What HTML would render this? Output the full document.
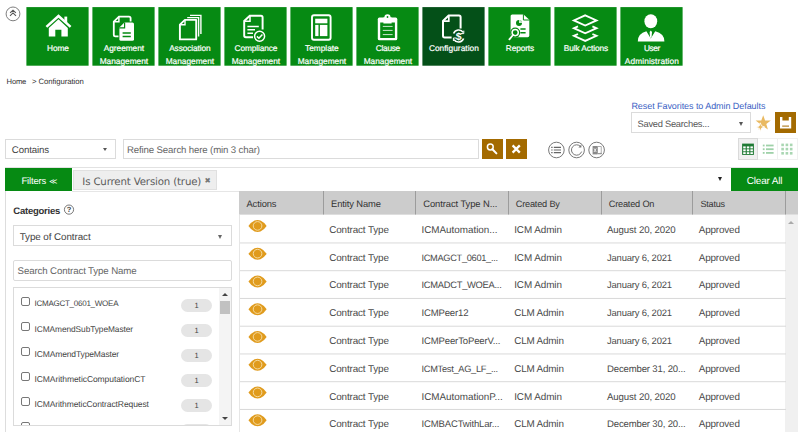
<!DOCTYPE html>
<html lang="en">
<head>
<meta charset="utf-8">
<title>Configuration</title>
<style>
*{box-sizing:border-box;margin:0;padding:0}
html,body{width:800px;height:432px;overflow:hidden;background:#fff}
body{position:relative;font-family:"Liberation Sans",sans-serif;color:#444;font-size:10px;text-rendering:geometricPrecision}
.a{position:absolute;white-space:nowrap}
.tile{position:absolute;top:7px;width:63px;height:59px;color:#fff;text-align:center;font-size:8.3px;line-height:12.6px}
.tile svg{position:absolute;left:0;top:0}
.tile .l{position:absolute;left:-5.6px;right:-6.4px;top:35.4px}
.tile .l span{display:block;height:12.6px;line-height:12.6px;-webkit-text-stroke:0.2px #fff}
.box{position:absolute;border:1px solid #dbdbdb;background:#fff}
.th{position:absolute;top:191px;height:24px;border-bottom:1px solid #dedede;background:#ccc;border-right:1px solid #9c9c9c;color:#333;font-size:9.6px;line-height:26.5px;padding-left:7.5px}
.row{position:absolute;left:239px;width:546px;height:27.7px;font-size:9.9px;line-height:29px;color:#4a4a4a}
.row span{position:relative;top:1px;display:inline-block;width:0;line-height:10px;white-space:nowrap;vertical-align:baseline}
.c1{left:90.2px}.c2{left:182.5px}.c3{left:275.2px}.c4{left:368px}.c5{left:459.7px}
.row svg{position:absolute;left:9px;top:3.6px}
.it{position:absolute;left:13px;width:206px;height:25px;font-size:8.5px;color:#444}
.it i{position:absolute;left:8.2px;top:1.4px;width:9px;height:9px;border:1px solid #777;border-radius:2px;background:#fff}
.it b{position:absolute;left:21.5px;top:2.2px;font-weight:normal;line-height:12px}
.it u{position:absolute;left:168px;top:2.7px;width:31px;height:13px;border-radius:6.5px;background:#e5e5e5;text-decoration:none;text-align:center;font-size:7.5px;line-height:13.5px;color:#444}
/*FIT*/
.h1 .hh{font-size:9.35px !important;letter-spacing:-0.109px}
.h2 .hh{font-size:9.37px !important;letter-spacing:-0.098px}
.h3 .hh{font-size:9.4px !important;letter-spacing:-0.067px}
.h4 .hh{font-size:9.18px !important;letter-spacing:-0.182px}
.h5 .hh{font-size:9.18px !important;letter-spacing:-0.186px}
.h6 .hh{font-size:9.06px !important;letter-spacing:-0.231px}
.c1{font-size:9.9px !important;letter-spacing:-0.133px}
.n0{font-size:9.9px !important;letter-spacing:-0.02px}
.n1{font-size:9.24px !important;letter-spacing:-0.306px}
.n2{font-size:9.36px !important;letter-spacing:-0.276px}
.n3{font-size:9.57px !important;letter-spacing:-0.172px}
.n4{font-size:9.56px !important;letter-spacing:-0.148px}
.n5{font-size:9.25px !important;letter-spacing:-0.283px}
.n6{font-size:9.9px !important;letter-spacing:-0.019px}
.n7{font-size:9.54px !important;letter-spacing:-0.157px}
.icm{font-size:9.9px !important;letter-spacing:-0.068px}
.clm{font-size:9.9px !important;letter-spacing:-0.168px}
.aug{font-size:9.66px !important;letter-spacing:-0.114px}
.jan{font-size:9.44px !important;letter-spacing:-0.184px}
.dec{font-size:9.55px !important;letter-spacing:-0.147px}
.c5{font-size:9.9px !important;letter-spacing:-0.147px}
#bc1{font-size:7.63px !important;letter-spacing:-0.198px}
#bc3{font-size:7.74px !important;letter-spacing:-0.064px}
#reset{font-size:9.0px !important;letter-spacing:-0.064px}
#saved{font-size:9.33px !important;letter-spacing:-0.265px}
#contains{font-size:9.69px !important;letter-spacing:-0.134px}
#refine{font-size:9.64px !important;letter-spacing:-0.132px}
#filt{font-size:9.54px !important;letter-spacing:-0.159px}
#chip{font-size:10.21px !important;letter-spacing:-0.158px}
#clear{font-size:10.0px !important;letter-spacing:-0.181px}
#cat{font-size:9.49px !important;letter-spacing:-0.226px}
#toc{font-size:9.82px !important;letter-spacing:-0.067px}
#sctn{font-size:9.69px !important;letter-spacing:-0.119px}
.i0{font-size:8.01px !important;letter-spacing:-0.252px}
.i1{font-size:8.34px !important;letter-spacing:-0.069px}
.i2{font-size:8.5px !important;letter-spacing:-0.131px}
.i3{font-size:8.5px !important;letter-spacing:-0.076px}
.i4{font-size:8.5px !important;letter-spacing:-0.102px}
.t0{font-size:8.3px !important;letter-spacing:-0.114px}
.t1a{font-size:8.3px !important;letter-spacing:-0.024px}
.mg{font-size:8.3px !important;letter-spacing:-0.004px}
.t2a{font-size:8.3px !important;letter-spacing:-0.084px}
.t3a{font-size:8.3px !important;letter-spacing:-0.113px}
.t4a{font-size:8.3px !important;letter-spacing:-0.01px}
.t5a{font-size:8.3px !important;letter-spacing:-0.286px}
.t6{font-size:8.3px !important;letter-spacing:0.053px}
.t7{font-size:8.3px !important;letter-spacing:-0.11px}
.t8{font-size:8.3px !important;letter-spacing:-0.073px}
.t9a{font-size:8.3px !important;letter-spacing:-0.377px}
.t9b{font-size:8.3px !important;letter-spacing:0.109px}
/*ENDFIT*/
</style>
</head>
<body>

<!-- collapse icon -->
<svg class="a" style="left:4px;top:6px" width="18" height="18" viewBox="0 0 18 18"><circle cx="9" cy="7.9" r="6.9" fill="#fff" stroke="#707070" stroke-width="0.9"/><path d="M6.1 6.8 L9 4.3 L11.9 6.8 M6 9.8 L9 6.9 L12 9.8" fill="none" stroke="#555" stroke-width="1.1"/></svg>

<!-- tiles -->
<div class="tile" id="tile0" style="left:26px"><svg width="63" height="59" viewBox="0 0 63 59"><rect x="0.4" y="0.1" width="62.2" height="58.6" fill="#068a13"/><path d="M20.4 19.9 L32.5 9 L44.6 19.9" fill="none" stroke="#fff" stroke-width="2.5" stroke-linejoin="miter"/><rect x="38.4" y="9.6" width="2.8" height="6" fill="#fff"/><path d="M22.8 21 L32.5 12.2 L41.8 21 V29.4 H35.4 V22.8 H29.3 V29.4 H22.8 Z" fill="#fff"/></svg><div class="l"><span class="t0">Home</span></div></div>
<div class="tile" id="tile1" style="left:92px"><svg width="63" height="59" viewBox="0 0 63 59"><rect x="0.4" y="0.1" width="62.2" height="58.6" fill="#068a13"/><path d="M26.5 29.4 H23.4 Q21.8 29.4 21.8 27.8 V14.6 L27 9.6 H37 Q38.6 9.6 38.6 11.2 V14.5" fill="none" stroke="#fff" stroke-width="1.8"/><path d="M21.8 14.8 H26.9 V9.6" fill="none" stroke="#fff" stroke-width="1.5"/><path d="M27.4 20.6 L32.4 15.6 H40.4 Q42 15.6 42 17.2 V32.2 Q42 33.8 40.4 33.8 H29 Q27.4 33.8 27.4 32.2 Z" fill="#fff"/><path d="M27.2 20.8 H32.6 V15.4" fill="none" stroke="#068a13" stroke-width="1.2"/><path d="M30.6 26 H38.8 M30.6 29.4 H38.8" stroke="#068a13" stroke-width="1.5"/></svg><div class="l"><span class="t1a">Agreement</span><span class="mg">Management</span></div></div>
<div class="tile" id="tile2" style="left:158px"><svg width="63" height="59" viewBox="0 0 63 59"><rect x="0.4" y="0.1" width="62.2" height="58.6" fill="#068a13"/><path d="M21.9 17.6 L26.9 12.9 H38.2 V32.4 H21.9 Z" fill="none" stroke="#fff" stroke-width="1.9" stroke-linejoin="round"/><path d="M22 17.8 H27 V13" fill="none" stroke="#fff" stroke-width="1.4"/><path d="M29.2 10.6 H40.6 V29.6 M32 8.4 H42.9 V27" fill="none" stroke="#fff" stroke-width="1.4"/></svg><div class="l"><span class="t2a">Association</span><span class="mg">Management</span></div></div>
<div class="tile" id="tile3" style="left:224px"><svg width="63" height="59" viewBox="0 0 63 59"><rect x="0.4" y="0.1" width="62.2" height="58.6" fill="#068a13"/><path d="M29 30.2 H21.8 Q20.2 30.2 20.2 28.6 V14 L25.8 8.8 H37 Q38.6 8.8 38.6 10.4 V22.5" fill="none" stroke="#fff" stroke-width="1.95"/><path d="M20.4 14.2 H26 V9" fill="none" stroke="#fff" stroke-width="1.5"/><path d="M23.4 19.4 H34.8 M23.4 22.8 H31 M23.4 26.2 H29" stroke="#fff" stroke-width="1.5"/><circle cx="35.6" cy="29.3" r="5" fill="#068a13" stroke="#fff" stroke-width="1.5"/><path d="M32.9 29.4 L34.9 31.3 L38.4 27.5" fill="none" stroke="#fff" stroke-width="1.5"/></svg><div class="l"><span class="t3a">Compliance</span><span class="mg">Management</span></div></div>
<div class="tile" id="tile4" style="left:290px"><svg width="63" height="59" viewBox="0 0 63 59"><rect x="0.4" y="0.1" width="62.2" height="58.6" fill="#068a13"/><rect x="22" y="8.2" width="18.6" height="24.6" rx="2" fill="none" stroke="#fff" stroke-width="1.9"/><rect x="25.2" y="11.7" width="12.2" height="4.6" fill="#fff"/><rect x="25.2" y="17.9" width="3.3" height="11.2" fill="#fff"/><rect x="29.9" y="17.9" width="7.5" height="11.2" fill="#fff"/></svg><div class="l"><span class="t4a">Template</span><span class="mg">Management</span></div></div>
<div class="tile" id="tile5" style="left:356px"><svg width="63" height="59" viewBox="0 0 63 59"><rect x="0.4" y="0.1" width="62.2" height="58.6" fill="#068a13"/><rect x="21.8" y="10.6" width="19.5" height="22.7" rx="1.6" fill="#fff"/><circle cx="31.5" cy="10.4" r="3.1" fill="#fff"/><rect x="27.4" y="10.4" width="8.2" height="5.4" fill="#fff"/><circle cx="31.5" cy="10" r="0.9" fill="#068a13"/><path d="M24.2 15.4 H27.4 V16.6 H35.6 V15.4 H38.9 V30.9 H24.2 Z" fill="#068a13"/><path d="M26.8 19.4 H36.6 M26.8 23.4 H36.6 M26.8 27.6 H36.6" stroke="#fff" stroke-width="0.8"/></svg><div class="l"><span class="t5a">Clause</span><span class="mg">Management</span></div></div>
<div class="tile on" id="tile6" style="left:422px"><svg width="63" height="59" viewBox="0 0 63 59"><rect x="0.4" y="0.1" width="62.2" height="58.6" fill="#045018"/><path d="M29.6 30.4 H22.6 Q21 30.4 21 28.8 V14 L26.6 8.6 H37 Q38.6 8.6 38.6 10.2 V21.5" fill="none" stroke="#fff" stroke-width="2"/><path d="M21.2 14.2 H26.8 V8.8" fill="none" stroke="#fff" stroke-width="1.7"/><path d="M31.6 26.6 A5.4 5.4 0 0 1 41.2 25.4 M41.6 31.4 A5.4 5.4 0 0 1 32 32.6" fill="none" stroke="#fff" stroke-width="1.6"/><path d="M41.8 23.6 V26.6 H38.8 M31.4 34 V31 H34.4" fill="none" stroke="#fff" stroke-width="1"/><text x="36.6" y="32.6" font-size="10.5" font-weight="bold" fill="#fff" text-anchor="middle" font-family="Liberation Sans, sans-serif">$</text></svg><div class="l"><span class="t6">Configuration</span></div></div>
<div class="tile" id="tile7" style="left:488px"><svg width="63" height="59" viewBox="0 0 63 59"><rect x="0.4" y="0.1" width="62.2" height="58.6" fill="#068a13"/><path d="M24.2 7.4 H35.6 L41.3 12.8 V28.6 Q41.3 30.2 39.7 30.2 H24.2 Q22.6 30.2 22.6 28.6 V9 Q22.6 7.4 24.2 7.4 Z" fill="#fff"/><path d="M35.4 7.2 V13 H41.5" fill="none" stroke="#068a13" stroke-width="1"/><circle cx="31" cy="15.9" r="3" fill="#068a13"/><path d="M31 15.9 V12.9 A3 3 0 0 1 34 15.9 Z" fill="#fff" opacity=".8"/><path d="M32.4 22.1 H37.6 M32.4 25.8 H37.6" stroke="#068a13" stroke-width="1.5"/><circle cx="27.2" cy="25.6" r="5" fill="#068a13"/><path d="M25.6 27.6 L20.6 33.2" stroke="#068a13" stroke-width="4"/><circle cx="27.2" cy="25.6" r="3.1" fill="#068a13" stroke="#fff" stroke-width="1.5"/><path d="M25 28 L21.4 32.4" stroke="#fff" stroke-width="1.8" stroke-linecap="round"/></svg><div class="l"><span class="t7">Reports</span></div></div>
<div class="tile" id="tile8" style="left:554px"><svg width="63" height="59" viewBox="0 0 63 59"><rect x="0.4" y="0.1" width="62.2" height="58.6" fill="#068a13"/><path d="M31.2 8.35 L42.5 13.45 L31.2 18.55 L19.9 13.45 Z" fill="none" stroke="#fff" stroke-width="1.9" stroke-linejoin="miter"/><path d="M24 19.3 L19.9 21.15 L31.2 26.25 L42.5 21.15 L38.4 19.3" fill="none" stroke="#fff" stroke-width="1.9"/><path d="M24 27 L19.9 28.85 L31.2 33.95 L42.5 28.85 L38.4 27" fill="none" stroke="#fff" stroke-width="1.9"/></svg><div class="l"><span class="t8">Bulk Actions</span></div></div>
<div class="tile" id="tile9" style="left:620px"><svg width="63" height="59" viewBox="0 0 63 59"><rect x="0.4" y="0.1" width="62.2" height="58.6" fill="#068a13"/><ellipse cx="30.8" cy="14.2" rx="6.4" ry="7" fill="#fff"/><path d="M17.8 34.4 Q17.8 26.4 26.4 24.2 L30.8 31.6 L35.2 24.2 Q44.4 26.4 44.4 34.4 Z" fill="#fff"/><path d="M30.8 23.6 L32 25 L31.6 30 L30.8 31.4 L30 30 L29.6 25 Z" fill="#fff"/></svg><div class="l"><span class="t9a">User</span><span class="t9b">Administration</span></div></div>

<!-- breadcrumb -->
<div class="a" id="bc" style="left:6.6px;top:77px;font-size:7.9px;line-height:10px;color:#333"><span id="bc1">Home</span><span id="bc2" style="position:absolute;left:25.4px;top:0">&gt;</span><span id="bc3" style="position:absolute;left:31.9px;top:0">Configuration</span></div>

<!-- favorites -->
<div class="a" id="reset" style="left:631.4px;top:100px;font-size:9px;line-height:12px;color:#3b5fc4">Reset Favorites to Admin Defaults</div>
<div class="box" style="left:631px;top:112px;width:120px;height:21px"></div>
<div class="a" id="saved" style="left:637.5px;top:117.5px;font-size:10px;line-height:13px;color:#555">Saved Searches...</div>
<div class="a" style="left:738.6px;top:122.2px;width:0;height:0;border-left:2.5px solid transparent;border-right:2.5px solid transparent;border-top:4px solid #555"></div>
<div class="a" style="left:775px;top:112px;width:21px;height:21px;background:#a36a00"><svg width="21" height="21" viewBox="0 0 21 21"><path d="M5 5 H7.4 V8.4 H13.8 V5 H16.2 V16.6 H5 Z" fill="#fff"/><path d="M7.2 14.1 H14" stroke="#a36a00" stroke-width="1"/></svg></div>
<svg class="a" style="left:754px;top:114px" width="19" height="19" viewBox="0 0 19 19"><path d="M9.2 1.2 L11.1 6.4 L16.8 6.6 L12.3 10 L13.9 15.4 L9.2 12.2 L4.5 15.4 L6.1 10 L1.6 6.6 L7.3 6.4 Z" fill="#e9b961"/><path d="M6.3 8.8 L7.5 11.9 L10.6 12.9 L7.6 14.1 L6.5 17.4 L5.3 14.2 L2 13.3 L5.2 12 Z" fill="#e9b961" stroke="#fff" stroke-width="0.8"/></svg>

<!-- search row -->
<div class="box" style="left:5px;top:139px;width:111px;height:20px"></div>
<div class="a" id="contains" style="left:11.8px;top:143.6px;font-size:10px;line-height:13px;color:#444">Contains</div>
<div class="a" style="left:102.6px;top:148.2px;width:0;height:0;border-left:2.6px solid transparent;border-right:2.6px solid transparent;border-top:3.8px solid #555"></div>
<div class="box" style="left:123px;top:139px;width:356px;height:20px"></div>
<div class="a" id="refine" style="left:127px;top:143.6px;font-size:10px;line-height:13px;color:#666">Refine Search here (min 3 char)</div>
<div class="a" style="left:482px;top:139px;width:21px;height:20px;background:#a36a00"><svg width="21" height="20" viewBox="0 0 21 20"><circle cx="8.3" cy="8" r="2.9" fill="none" stroke="#fff" stroke-width="1.5"/><path d="M10.4 10.2 L14.4 14.4" stroke="#fff" stroke-width="2" stroke-linecap="round"/></svg></div>
<div class="a" style="left:506px;top:139px;width:21px;height:20px;background:#a36a00"><svg width="21" height="20" viewBox="0 0 21 20"><path d="M6.6 6.4 L13.8 13.6 M13.8 6.4 L6.6 13.6" stroke="#fff" stroke-width="2.3"/></svg></div>
<svg class="a" style="left:546px;top:140px" width="62" height="20" viewBox="0 0 62 20"><circle cx="10.4" cy="10" r="7.8" fill="#fff" stroke="#6a6a6a" stroke-width="0.9"/><path d="M7.8 7.3 H15 M7.8 10 H15 M7.8 12.7 H15" stroke="#666" stroke-width="1.2"/><path d="M5.2 7.3 H6.6 M5.2 10 H6.6 M5.2 12.7 H6.6" stroke="#666" stroke-width="1.2"/><circle cx="30.6" cy="10" r="7.8" fill="#fff" stroke="#6a6a6a" stroke-width="0.9"/><path d="M34.6 6.6 A5.2 5.2 0 1 0 35.6 11.6" fill="none" stroke="#777" stroke-width="1"/><path d="M35.4 4.4 V7.4 H32.4 Z" fill="#777"/><circle cx="50.6" cy="10" r="7.8" fill="#fff" stroke="#6a6a6a" stroke-width="0.9"/><rect x="46.6" y="6" width="5" height="8.4" fill="#8a8a8a"/><rect x="51.6" y="6.6" width="3.6" height="7" fill="none" stroke="#999" stroke-width="0.8"/><path d="M48 8.4 L50.2 12 M50.2 8.4 L48 12" stroke="#fff" stroke-width="0.8"/><path d="M52 13.8 H55.6 L54.6 12.8" stroke="#888" stroke-width="0.7" fill="none"/></svg>

<div class="a" style="left:738px;top:138px;width:60px;height:22px;border:1px solid #f0f0f0"></div>
<div class="a" style="left:738px;top:138px;width:20px;height:22px;background:#f0f0f0;border:1px solid #dadada"></div>
<div class="a" style="left:777px;top:139px;width:1px;height:20px;background:#f0f0f0"></div>
<svg class="a" style="left:742px;top:143px" width="12" height="12" viewBox="0 0 12 12"><rect x="0.1" y="0.6" width="11.8" height="11.3" fill="#1e7a34"/><g fill="#fff"><rect x="1.2" y="3.4" width="2.5" height="2"/><rect x="4.8" y="3.4" width="2.5" height="2"/><rect x="8.4" y="3.4" width="2.5" height="2"/><rect x="1.2" y="6.3" width="2.5" height="2"/><rect x="4.8" y="6.3" width="2.5" height="2"/><rect x="8.4" y="6.3" width="2.5" height="2"/><rect x="1.2" y="9.2" width="2.5" height="1.8"/><rect x="4.8" y="9.2" width="2.5" height="1.8"/><rect x="8.4" y="9.2" width="2.5" height="1.8"/></g></svg>
<svg class="a" style="left:762px;top:143px" width="13" height="12" viewBox="0 0 13 12"><g fill="#9fd1a9"><rect x="0.8" y="1.6" width="1.8" height="1.8"/><rect x="4" y="1.6" width="7.6" height="1.8"/><rect x="0.8" y="5.3" width="1.8" height="1.8"/><rect x="4" y="5.3" width="7.6" height="1.8"/><rect x="0.8" y="9" width="1.8" height="1.8"/><rect x="4" y="9" width="7.6" height="1.8"/></g></svg>
<svg class="a" style="left:781px;top:143px" width="12" height="12" viewBox="0 0 12 12"><g fill="#a9d6b2"><rect x="0.3" y="0.6" width="2.6" height="2.6"/><rect x="4.6" y="0.6" width="2.6" height="2.6"/><rect x="8.9" y="0.6" width="2.6" height="2.6"/><rect x="0.3" y="4.8" width="2.6" height="2.6"/><rect x="4.6" y="4.8" width="2.6" height="2.6"/><rect x="8.9" y="4.8" width="2.6" height="2.6"/><rect x="0.3" y="9" width="2.6" height="2.6"/><rect x="4.6" y="9" width="2.6" height="2.6"/><rect x="8.9" y="9" width="2.6" height="2.6"/></g></svg>
<!-- separator -->
<div class="a" style="left:5px;top:167px;width:793px;height:1px;background:#e2e2e2"></div>

<!-- filter bar -->
<div class="a" style="left:5px;top:168px;width:67px;height:23px;background:#068a13;color:#fff;font-size:10px;line-height:27.4px;padding-left:16.4px" id="filters"><span id="filt">Filters</span> <span id="ll" style="font-size:8px;position:relative;top:-0.3px">&#x226A;</span></div>
<div class="a" style="left:73px;top:170px;width:144px;height:20px;background:#eee;border:1px solid #e0e0e0"></div>
<div class="a" id="chip" style="left:82.3px;top:175.6px;font-family:'DejaVu Sans',sans-serif;font-size:10.6px;line-height:13px;color:#5a5a5a">Is Current Version (true)</div>
<div class="a" id="chipx" style="left:204.6px;top:174.6px;font-size:7.5px;line-height:12px;color:#777;font-family:'DejaVu Sans',sans-serif">&#x2716;</div>
<div class="a" style="left:718.4px;top:177.4px;width:0;height:0;border-left:2.5px solid transparent;border-right:2.5px solid transparent;border-top:4px solid #222"></div>
<div class="a" id="clear" style="left:731px;top:168px;width:67px;height:23px;background:#068a13;color:#fff;font-size:10.5px;line-height:27px;text-align:center">Clear All</div>

<div class="a" style="left:72px;top:191px;width:167px;height:1px;background:#e6e6e6"></div>
<!-- left panel -->
<div class="a" style="left:5px;top:191px;width:1px;height:241px;background:#ddd"></div>
<div class="a" id="cat" style="left:13.3px;top:204.6px;font-size:10px;line-height:13px;color:#333;font-weight:bold">Categories</div>
<svg class="a" style="left:63px;top:204px" width="12" height="12" viewBox="0 0 12 12"><circle cx="6" cy="5.6" r="4.6" fill="#fff" stroke="#555" stroke-width="0.8"/><text x="6" y="8.4" font-size="7.5" font-weight="bold" text-anchor="middle" fill="#444" font-family="Liberation Sans, sans-serif">?</text></svg>
<div class="box" style="left:13px;top:225px;width:219px;height:21px"></div>
<div class="a" id="toc" style="left:19.7px;top:231px;font-size:10px;line-height:13px;color:#444">Type of Contract</div>
<div class="a" style="left:218.4px;top:235px;width:0;height:0;border-left:2.7px solid transparent;border-right:2.7px solid transparent;border-top:4px solid #666"></div>
<div class="box" style="left:13px;top:260px;width:219px;height:21px;border-radius:2px"></div>
<div class="a" id="sctn" style="left:17.6px;top:265px;font-size:10px;line-height:13px;color:#666">Search Contract Type Name</div>
<div class="box" style="left:13px;top:287px;width:219px;height:139px"></div>

<div class="a" style="left:219px;top:288px;width:12px;height:137px;background:#f4f4f4"></div>
<div class="a" style="left:220px;top:301px;width:10px;height:13px;background:#c1c1c1"></div>
<div class="a" style="left:222px;top:293px;width:0;height:0;border-left:3px solid transparent;border-right:3px solid transparent;border-bottom:3.5px solid #444"></div>
<div class="a" style="left:222px;top:416.5px;width:0;height:0;border-left:3px solid transparent;border-right:3px solid transparent;border-top:3.5px solid #444"></div>
<div class="it" style="top:296px"><i></i><b class="i0">ICMAGCT_0601_WOEA</b><u>1</u></div>
<div class="it" style="top:321px"><i></i><b class="i1">ICMAmendSubTypeMaster</b><u>1</u></div>
<div class="it" style="top:346px"><i></i><b class="i2">ICMAmendTypeMaster</b><u>1</u></div>
<div class="it" style="top:371px"><i></i><b class="i3">ICMArithmeticComputationCT</b><u>1</u></div>
<div class="it" style="top:396px"><i></i><b class="i4">ICMArithmeticContractRequest</b><u>1</u></div>

<div class="a" style="left:14px;top:420px;width:205px;height:5px;overflow:hidden"><div class="it" style="top:1px;left:-1px"><i></i><u></u></div></div>

<!-- grid header -->
<div class="th h1" style="left:239px;width:85px"><span class="hh">Actions</span></div>
<div class="th h2" style="left:324px;width:92px;padding-left:7px"><span class="hh">Entity Name</span></div>
<div class="th h3" style="left:416px;width:93px;padding-left:7.2px"><span class="hh">Contract Type N...</span></div>
<div class="th h4" style="left:509px;width:93px;padding-left:6.7px"><span class="hh">Created By</span></div>
<div class="th h5" style="left:602px;width:91px;padding-left:6.7px"><span class="hh">Created On</span></div>
<div class="th h6" style="left:693px;width:93px;padding-left:7.5px"><span class="hh">Status</span></div>
<div class="th h7" style="left:786px;width:12px;border-right:0;padding:0"></div>
<div class="a" style="left:785px;top:215px;width:13px;height:217px;background:#f0f0f0"></div>

<div class="a" style="left:788px;top:220.5px;width:0;height:0;border-left:3px solid transparent;border-right:3px solid transparent;border-bottom:3.5px solid #aaa"></div>
<svg class="a" style="left:239px;top:215px" width="547" height="217" viewBox="0 0 547 217"><rect x="0" y="27.45" width="547" height="1" fill="#d9d9d9"/><rect x="0" y="55.20" width="547" height="1" fill="#d9d9d9"/><rect x="0" y="82.95" width="547" height="1" fill="#d9d9d9"/><rect x="0" y="110.70" width="547" height="1" fill="#d9d9d9"/><rect x="0" y="138.45" width="547" height="1" fill="#d9d9d9"/><rect x="0" y="166.20" width="547" height="1" fill="#d9d9d9"/><rect x="0" y="193.95" width="547" height="1" fill="#d9d9d9"/><rect x="0" y="0" width="1" height="217" fill="#e6e6e6"/><g transform="translate(9.05,4.00)"><path d="M0.4 7 Q3.2 2.8 6.6 1.4 Q9.5 0.5 12.4 1.4 Q15.8 2.8 18.6 7 Q15.8 11.2 12.4 12.6 Q9.5 13.5 6.6 12.6 Q3.2 11.2 0.4 7 Z" fill="#e09b1d"/><circle cx="9.5" cy="6.9" r="4.3" fill="none" stroke="#f6e0ac" stroke-width="0.9"/></g><g transform="translate(9.05,31.75)"><path d="M0.4 7 Q3.2 2.8 6.6 1.4 Q9.5 0.5 12.4 1.4 Q15.8 2.8 18.6 7 Q15.8 11.2 12.4 12.6 Q9.5 13.5 6.6 12.6 Q3.2 11.2 0.4 7 Z" fill="#e09b1d"/><circle cx="9.5" cy="6.9" r="4.3" fill="none" stroke="#f6e0ac" stroke-width="0.9"/></g><g transform="translate(9.05,59.50)"><path d="M0.4 7 Q3.2 2.8 6.6 1.4 Q9.5 0.5 12.4 1.4 Q15.8 2.8 18.6 7 Q15.8 11.2 12.4 12.6 Q9.5 13.5 6.6 12.6 Q3.2 11.2 0.4 7 Z" fill="#e09b1d"/><circle cx="9.5" cy="6.9" r="4.3" fill="none" stroke="#f6e0ac" stroke-width="0.9"/></g><g transform="translate(9.05,87.25)"><path d="M0.4 7 Q3.2 2.8 6.6 1.4 Q9.5 0.5 12.4 1.4 Q15.8 2.8 18.6 7 Q15.8 11.2 12.4 12.6 Q9.5 13.5 6.6 12.6 Q3.2 11.2 0.4 7 Z" fill="#e09b1d"/><circle cx="9.5" cy="6.9" r="4.3" fill="none" stroke="#f6e0ac" stroke-width="0.9"/></g><g transform="translate(9.05,115.00)"><path d="M0.4 7 Q3.2 2.8 6.6 1.4 Q9.5 0.5 12.4 1.4 Q15.8 2.8 18.6 7 Q15.8 11.2 12.4 12.6 Q9.5 13.5 6.6 12.6 Q3.2 11.2 0.4 7 Z" fill="#e09b1d"/><circle cx="9.5" cy="6.9" r="4.3" fill="none" stroke="#f6e0ac" stroke-width="0.9"/></g><g transform="translate(9.05,142.75)"><path d="M0.4 7 Q3.2 2.8 6.6 1.4 Q9.5 0.5 12.4 1.4 Q15.8 2.8 18.6 7 Q15.8 11.2 12.4 12.6 Q9.5 13.5 6.6 12.6 Q3.2 11.2 0.4 7 Z" fill="#e09b1d"/><circle cx="9.5" cy="6.9" r="4.3" fill="none" stroke="#f6e0ac" stroke-width="0.9"/></g><g transform="translate(9.05,170.50)"><path d="M0.4 7 Q3.2 2.8 6.6 1.4 Q9.5 0.5 12.4 1.4 Q15.8 2.8 18.6 7 Q15.8 11.2 12.4 12.6 Q9.5 13.5 6.6 12.6 Q3.2 11.2 0.4 7 Z" fill="#e09b1d"/><circle cx="9.5" cy="6.9" r="4.3" fill="none" stroke="#f6e0ac" stroke-width="0.9"/></g><g transform="translate(9.05,198.25)"><path d="M0.4 7 Q3.2 2.8 6.6 1.4 Q9.5 0.5 12.4 1.4 Q15.8 2.8 18.6 7 Q15.8 11.2 12.4 12.6 Q9.5 13.5 6.6 12.6 Q3.2 11.2 0.4 7 Z" fill="#e09b1d"/><circle cx="9.5" cy="6.9" r="4.3" fill="none" stroke="#f6e0ac" stroke-width="0.9"/></g></svg>
<!-- rows -->
<div class="row" style="top:215.45px"><span class="c1">Contract Type</span><span class="c2 n0">ICMAutomation...</span><span class="c3 icm">ICM Admin</span><span class="c4 aug">August 20, 2020</span><span class="c5">Approved</span></div>
<div class="row" style="top:243.45px"><span class="c1">Contract Type</span><span class="c2 n1">ICMAGCT_0601_...</span><span class="c3 icm">ICM Admin</span><span class="c4 jan">January 6, 2021</span><span class="c5">Approved</span></div>
<div class="row" style="top:270.45px"><span class="c1">Contract Type</span><span class="c2 n2">ICMADCT_WOEA...</span><span class="c3 icm">ICM Admin</span><span class="c4 jan">January 6, 2021</span><span class="c5">Approved</span></div>
<div class="row" style="top:298.45px"><span class="c1">Contract Type</span><span class="c2 n3">ICMPeer12</span><span class="c3 clm">CLM Admin</span><span class="c4 jan">January 6, 2021</span><span class="c5">Approved</span></div>
<div class="row" style="top:326.45px"><span class="c1">Contract Type</span><span class="c2 n4">ICMPeerToPeerV...</span><span class="c3 clm">CLM Admin</span><span class="c4 jan">January 6, 2021</span><span class="c5">Approved</span></div>
<div class="row" style="top:354.45px"><span class="c1">Contract Type</span><span class="c2 n5">ICMTest_AG_LF_...</span><span class="c3 clm">CLM Admin</span><span class="c4 dec">December 31, 20...</span><span class="c5">Approved</span></div>
<div class="row" style="top:382.45px"><span class="c1">Contract Type</span><span class="c2 n6">ICMAutomationP...</span><span class="c3 icm">ICM Admin</span><span class="c4 aug">August 20, 2020</span><span class="c5">Approved</span></div>
<div class="row" style="top:409.45px"><span class="c1">Contract Type</span><span class="c2 n7">ICMBACTwithLar...</span><span class="c3 clm">CLM Admin</span><span class="c4 dec">December 30, 20...</span><span class="c5">Approved</span></div>

</body>
</html>
